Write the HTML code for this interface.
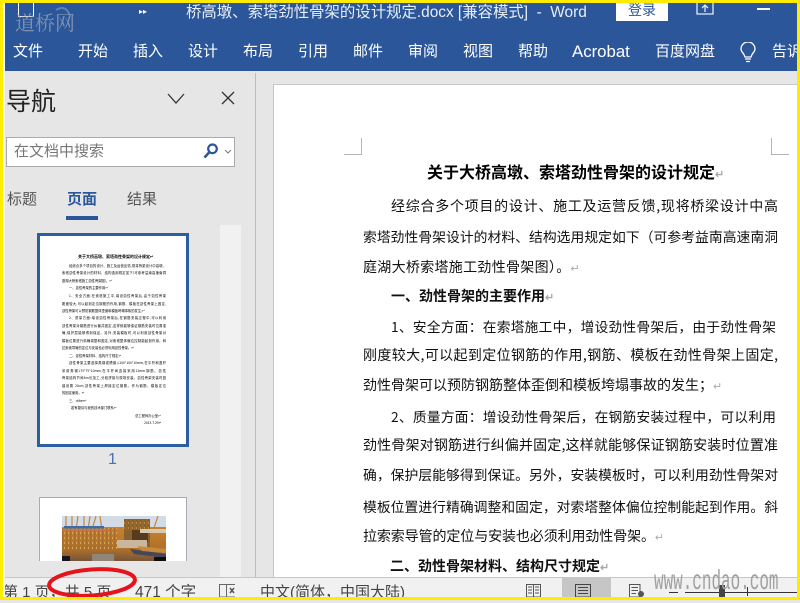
<!DOCTYPE html>
<html lang="zh"><head><meta charset="utf-8"><style>
*{box-sizing:border-box}
html,body{margin:0;padding:0}
body{width:800px;height:600px;overflow:hidden;position:relative;background:#e6e6e6;font-family:"Liberation Sans","Noto Sans CJK SC",sans-serif;color:#333}
.a{position:absolute;white-space:nowrap}
.tab{position:absolute;top:42px;color:#fff;font-size:15px;line-height:20px;white-space:nowrap}
.l{position:absolute;left:363px;width:415px;font-family:"Noto Sans CJK SC",sans-serif;font-size:14px;line-height:20px;color:#111;white-space:normal;text-align:justify;text-align-last:justify;height:20px;overflow:hidden}
.l.i{left:391px;width:385px}
.l.s{text-align-last:left}
.b{font-weight:700;text-align-last:left;left:391px;width:380px}
.m{color:#aaa;font-size:11px}
.t{position:absolute;left:62px;width:104px;height:7px;font-size:3.300px;line-height:7px;color:#000;font-family:"Noto Sans CJK SC",sans-serif;white-space:normal;overflow:hidden;text-align:justify;text-align-last:justify}
.t.n{text-align-last:left}
.t.i{left:69px;width:97px}
.st{position:absolute;top:583px;font-size:15px;line-height:20px;color:#444;white-space:nowrap}
</style></head><body>
<!-- ribbon -->
<div class="a" style="left:0;top:0;width:800px;height:71px;background:#2b579a"></div>
<div class="a" style="left:18px;top:0;width:16px;height:17px;border:1.500px solid #fff;border-top:0"></div>
<svg class="a" style="left:50px;top:2px" width="70" height="30"><path d="M60 10 a8 8 0 1 1 -6 -6" fill="none" stroke="#7d9cc8" stroke-width="2.500" transform="translate(52,0)"/><path d="M4 8q10-6 14 6" fill="none" stroke="#5f82b6" stroke-width="2" transform="translate(2,0)"/></svg>
<div class="a" style="left:15px;top:10px;font-size:20px;line-height:24px;color:#8f9fb3;letter-spacing:0;font-family:'Noto Serif CJK SC',serif;opacity:.85">道桥网</div>
<div class="a" style="left:139px;top:5px;font-size:8px;line-height:14px;color:#fff">▸▸</div>
<div class="a" style="left:186px;top:2px;font-size:15.400px;line-height:22px;color:#e8edf5">桥高墩、索塔劲性骨架的设计规定.docx [兼容模式] &nbsp;- &nbsp;Word</div>
<div class="a" style="left:616px;top:0;width:52px;height:21px;background:#fff;color:#2b579a;font-size:14px;line-height:20px;text-align:center">登录</div>
<svg class="a" style="left:696px;top:0" width="20" height="16"><path d="M1 0V14H17V0M1 1H17M9 12V5M6 8l3-3 3 3" fill="none" stroke="#e4e9f2" stroke-width="1.300"/></svg>
<div class="a" style="left:757px;top:8px;width:13px;height:1.500px;background:#fff"></div>
<div class="tab" style="left:13px">文件</div>
<div class="tab" style="left:78px">开始</div>
<div class="tab" style="left:133px">插入</div>
<div class="tab" style="left:188px">设计</div>
<div class="tab" style="left:243px">布局</div>
<div class="tab" style="left:298px">引用</div>
<div class="tab" style="left:353px">邮件</div>
<div class="tab" style="left:408px">审阅</div>
<div class="tab" style="left:463px">视图</div>
<div class="tab" style="left:518px">帮助</div>
<div class="tab" style="left:572px;font-size:16.800px">Acrobat</div>
<div class="tab" style="left:655px">百度网盘</div>
<svg class="a" style="left:739px;top:42px" width="18" height="22"><path d="M6 15C5 11 2 10 2 7A6.800 6.800 0 0 1 16 7C16 10 13 11 12 15ZM6 17H12M7 19.500H11" fill="none" stroke="#fff" stroke-width="1.300"/></svg>
<div class="tab" style="left:772px;width:25px;overflow:hidden">告诉</div>

<!-- nav pane -->
<div class="a" style="left:255px;top:73px;width:1px;height:505px;background:#bcbcbc"></div>
<div class="a" style="left:6px;top:86px;font-size:25px;line-height:32px;color:#222;width:60px;overflow:hidden">导航</div>
<svg class="a" style="left:166px;top:92px" width="20" height="14"><path d="M2 2L10 11L18 2" fill="none" stroke="#333" stroke-width="1.300"/></svg>
<svg class="a" style="left:220px;top:91px" width="16" height="14"><path d="M2 1L14 13M14 1L2 13" fill="none" stroke="#333" stroke-width="1.300"/></svg>
<div class="a" style="left:6px;top:137px;width:229px;height:30px;background:#fff;border:1px solid #ababab"></div>
<div class="a" style="left:14px;top:142px;font-size:15px;line-height:20px;color:#777">在文档中搜索</div>
<svg class="a" style="left:203px;top:143px" width="16" height="16"><circle cx="9.500" cy="5.800" r="4.300" fill="none" stroke="#2b579a" stroke-width="2.200"/><path d="M6.500 9L1.500 14.500" stroke="#2b579a" stroke-width="2.600"/></svg>
<svg class="a" style="left:224px;top:149px" width="10" height="6"><path d="M1 1L4 4L7 1" fill="none" stroke="#777" stroke-width="1"/></svg>
<div class="a" style="left:7px;top:190px;font-size:15px;line-height:20px;color:#555">标题</div>
<div class="a" style="left:67px;top:190px;font-size:15px;line-height:20px;color:#2b579a;font-weight:700">页面</div>
<div class="a" style="left:127px;top:190px;font-size:15px;line-height:20px;color:#555">结果</div>
<div class="a" style="left:66px;top:216px;width:32px;height:4px;background:#2b579a"></div>
<div class="a" style="left:220px;top:225px;width:21px;height:352px;background:#f1f1f1"></div>

<!-- thumb 1 -->
<div class="a" style="left:37px;top:233px;width:152px;height:214px;background:#fff;border:3px solid #2b5f9f"></div>
<div class="t n" style="left:78px;width:80px;top:254px;font-weight:700;font-size:4px">关于大桥高墩、索塔劲性骨架的设计规定↵</div>
<div class="t i" style="top:262px">经综合多个项目的设计、施工及运营反馈,现将桥梁设计中高墩、</div>
<div class="t" style="top:269px">索塔劲性骨架设计的材料、结构选用规定如下(可参考益南高速南洞</div>
<div class="t n" style="top:277px">庭湖大桥索塔施工劲性骨架图)。↵</div>
<div class="t n i" style="top:284px">一、劲性骨架的主要作用↵</div>
<div class="t i" style="top:292px">1、安全方面:在索塔施工中,增设劲性骨架后,由于劲性骨架</div>
<div class="t" style="top:300px">刚度较大,可以起到定位钢筋的作用,钢筋、模板在劲性骨架上固定,</div>
<div class="t n" style="top:307px">劲性骨架可以预防钢筋整体歪倒和模板垮塌事故的发生;↵</div>
<div class="t i" style="top:314px">2、质量方面:增设劲性骨架后,在钢筋安装过程中,可以利用</div>
<div class="t" style="top:322px">劲性骨架对钢筋进行纠偏并固定,这样就能够保证钢筋安装时位置准</div>
<div class="t" style="top:329px">确,保护层能够得到保证。另外,安装模板时,可以利用劲性骨架对</div>
<div class="t" style="top:337px">模板位置进行精确调整和固定,对索塔整体偏位控制能起到作用。斜</div>
<div class="t n" style="top:344px">拉索索导管的定位与安装也必须利用劲性骨架。↵</div>
<div class="t n i" style="top:352px">二、劲性骨架材料、结构尺寸规定↵</div>
<div class="t i" style="top:359px">劲性骨架主要选择角钢或槽钢,L100*100*10mm,在平杆和竖杆</div>
<div class="t" style="top:367px">采用角钢L75*75*10mm,在平杆间连接采用12mm钢筋。劲性</div>
<div class="t" style="top:374px">骨架结构节间6m长加工,分段拼接与现场安装。劲性骨架安装时竖</div>
<div class="t" style="top:382px">缝设置 20cm,劲性骨架上焊接定位钢筋。作为钢筋、模板定位</div>
<div class="t n" style="top:389px">的固定使用。↵</div>
<div class="t n i" style="top:397px">三、other↵</div>
<div class="t n" style="left:71px;width:97px;top:404px">若有疑请与我的技术部门联系↵</div>
<div class="t n" style="left:135px;width:40px;top:412px">总工程师办公室↵</div>
<div class="t n" style="left:144px;width:30px;top:419px">2013.7.29↵</div>
<div class="a" style="left:108px;top:451px;font-size:16px;line-height:18px;color:#4a72b0">1</div>

<!-- thumb 2 -->
<div class="a" style="left:39px;top:497px;width:148px;height:64px;background:#fff;border:1px solid #a7abb2;border-bottom:0"></div>
<svg class="a" style="left:62px;top:516px" width="104" height="45">
<defs>
<linearGradient id="g" x1="0" y1="0" x2="0" y2="1"><stop offset="0" stop-color="#c8822f"/><stop offset=".65" stop-color="#b0702a"/><stop offset="1" stop-color="#75553a"/></linearGradient>
<pattern id="p" width="4" height="5" patternUnits="userSpaceOnUse"><rect width="1.500" height="5" fill="#a56e2c"/><rect x="2" y="1" width="1" height="2" fill="#dba257"/></pattern>
</defs>
<rect width="104" height="45" fill="#d3dbe6"/>
<path d="M4 0V14M10 0V14M16 0L14 14M22 0V14M28 0L26 14M34 0L30 14M38 0L40 14M96 0L92 12" stroke="#bd8a3f" stroke-width="1.200"/>
<rect y="11" width="104" height="34" fill="url(#g)"/>
<rect y="12" width="55" height="24" fill="url(#p)"/>
<rect x="2" y="10" width="40" height="2.500" fill="#3f6ca8"/>
<rect x="0" y="13" width="45" height="1.500" fill="#d96a5a"/>
<rect x="62" y="3" width="26" height="28" fill="#86622f"/>
<rect x="62" y="3" width="26" height="12" fill="url(#p)" opacity=".6"/>
<rect x="70" y="14" width="16" height="12" fill="#5a3a1c"/>
<rect x="55" y="24" width="30" height="8" fill="#c9b79d"/>
<rect x="78" y="13" width="26" height="4" fill="#d8c8b0"/>
<path d="M68 33L104 38V42L72 38Z" fill="#44485a"/>
<path d="M75 30L104 33V37L80 35Z" fill="#c68a3c"/>
<rect x="0" y="40" width="8" height="5" fill="#16161c"/>
<rect x="92" y="41" width="12" height="4" fill="#0d0d0d"/>
<rect x="30" y="38" width="22" height="7" fill="#8f8678"/>
</svg>

<!-- document -->
<div class="a" style="left:273px;top:84px;width:524px;height:494px;background:#fff;border:1px solid #c6c6c6;border-right:0;border-bottom:0"></div>
<svg class="a" style="left:343px;top:137px" width="450" height="20"><path d="M1 17.500H18.500V1M428.500 1V17.500H446" fill="none" stroke="#b5b5b5"/></svg>
<div class="l s" style="left:427px;width:320px;top:161px;font-weight:700;font-size:16px;color:#000">关于大桥高墩、索塔劲性骨架的设计规定<span class="m">↵</span></div>
<div class="l" style="left:391px;width:387px;top:196px">经综合多个项目的设计、施工及运营反馈,现将桥梁设计中高墩、</div>
<div class="l" style="top:226px;font-size:13.800px">索塔劲性骨架设计的材料、结构选用规定如下（可参考益南高速南洞</div>
<div class="l s" style="top:257px;letter-spacing:.300px">庭湖大桥索塔施工劲性骨架图）。<span class="m">↵</span></div>
<div class="l b" style="top:286px">一、劲性骨架的主要作用<span class="m">↵</span></div>
<div class="l i" style="top:316px;font-size:13.700px">1、安全方面：在索塔施工中，增设劲性骨架后，由于劲性骨架</div>
<div class="l" style="top:345px">刚度较大,可以起到定位钢筋的作用,钢筋、模板在劲性骨架上固定,</div>
<div class="l s" style="top:375px">劲性骨架可以预防钢筋整体歪倒和模板垮塌事故的发生；<span class="m">↵</span></div>
<div class="l i" style="top:406px;font-size:13.700px">2、质量方面：增设劲性骨架后，在钢筋安装过程中，可以利用</div>
<div class="l" style="top:435px">劲性骨架对钢筋进行纠偏并固定,这样就能够保证钢筋安装时位置准</div>
<div class="l" style="top:464px;font-size:13.800px">确，保护层能够得到保证。另外，安装模板时，可以利用劲性骨架对</div>
<div class="l" style="top:496px;font-size:13.800px">模板位置进行精确调整和固定，对索塔整体偏位控制能起到作用。斜</div>
<div class="l s" style="top:526px;letter-spacing:-.100px">拉索索导管的定位与安装也必须利用劲性骨架。<span class="m">↵</span></div>
<div class="l b" style="left:390px;top:556px">二、劲性骨架材料、结构尺寸规定<span class="m">↵</span></div>

<!-- status bar -->
<div class="a" style="left:0;top:577px;width:800px;height:23px;background:#f1f1f1;border-top:1px solid #c6c6c6"></div>
<div class="st" style="left:5px;overflow:hidden;width:110px"><span style="margin-left:-2px;display:inline-block">第 1 页，共 5 页</span></div>
<div class="st" style="left:135px;font-size:15.500px">471 个字</div>
<svg class="a" style="left:219px;top:584px" width="18" height="14"><path d="M.5.500H7.500V13H.5ZM7.500.500H16M16 13H7.500" fill="none" stroke="#666"/><path d="M11 4l4 5M15 4l-4 5" stroke="#555" stroke-width="1.500"/></svg>
<div class="st" style="left:260px">中文(简体，中国大陆)</div>
<svg class="a" style="left:525px;top:584px" width="20" height="14"><path d="M1.500.500H8.500V13H1.500ZM8.500.500H15.500V13H8.500ZM3 3H7M3 6H7M3 9H7M10 3H14M10 6H14M10 9H14" fill="none" stroke="#555"/></svg>
<div class="a" style="left:562px;top:578px;width:49px;height:22px;background:#c6c6c6"></div>
<svg class="a" style="left:573px;top:584px" width="20" height="14"><path d="M2.500.500H17.500V13H2.500ZM5 3.500H15M5 6.500H15M5 9.500H15" fill="none" stroke="#444"/></svg>
<svg class="a" style="left:628px;top:584px" width="20" height="14"><path d="M1.500.500H12V13H1.500ZM3.500 3.500H10M3.500 6.500H10M3.500 9.500H8" fill="none" stroke="#555"/><circle cx="13" cy="10" r="3" fill="#555"/></svg>
<div class="a" style="left:669px;top:592px;width:9px;height:1px;background:#333"></div>
<div class="a" style="left:685px;top:592px;width:112px;height:1px;background:#333"></div>
<div class="a" style="left:719px;top:585px;width:6px;height:12px;background:#444"></div>
<div class="a" style="left:747px;top:587px;width:1px;height:9px;background:#333"></div>
<div class="a" style="left:654px;top:569px;font-family:'Liberation Mono',monospace;font-size:28px;line-height:28px;color:#a0a0a0;transform-origin:0 0;transform:scaleX(.57)">www.cndao.com</div>

<!-- red ellipse -->
<svg class="a" style="left:45px;top:564px" width="100" height="36"><ellipse cx="47" cy="18.500" rx="43" ry="13" fill="none" stroke="#e5141c" stroke-width="4" transform="rotate(-4 47 18.500)"/></svg>

<!-- yellow frame -->
<div class="a" style="left:0;top:0;width:800px;height:3px;background:#ffec00"></div>
<div class="a" style="left:0;top:0;width:3px;height:600px;background:#ffec00"></div>
<div class="a" style="left:3px;top:3px;width:2px;height:594px;background:#fff"></div>
<div class="a" style="left:797px;top:0;width:3px;height:600px;background:#ffec00"></div>
<div class="a" style="left:0;top:597px;width:800px;height:3px;background:#ffec00"></div>
</body></html>
